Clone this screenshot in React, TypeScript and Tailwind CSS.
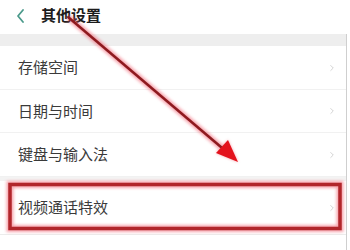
import { ChevronRight } from 'lucide-react';

const rows = [
    { label: '存储空间', h: 'h-[44px]' },
    { label: '日期与时间', h: 'h-[43px]' },
    { label: '键盘与输入法', h: 'h-[44px]' },
];

function Chevron() {
    return <ChevronRight className="w-[10px] h-[12px] text-[#b8b8b8]" strokeWidth={1.5} />;
}

function Row({ label, h }: { label: string; h: string }) {
    return (
        <div className={`${h} flex items-center justify-between pl-[18px] pr-[9px] border-b border-[#f1f1f1]`}>
            <span className="text-[15px] text-[#3a3a3a]">{label}</span>
            <Chevron />
        </div>
    );
}

export default function App() {
    return (
        <div
            className="relative w-[350px] h-[250px] overflow-hidden bg-white"
            style={{ fontFamily: '"Noto Sans CJK SC", "Noto Sans", sans-serif' }}
        >
            {/* Header */}
            <div className="h-[34px] flex items-center pl-[16px]">
                <svg width="9" height="14" viewBox="0 0 9 14" className="mt-[-2px]">
                    <polyline points="7,1 2,7 7,13" fill="none" stroke="#4b9a8b" strokeWidth="1.8" strokeLinecap="round" strokeLinejoin="round" />
                </svg>
                <span className="ml-[16px] text-[15px] font-bold text-[#1c1c1c] mt-[-4px]">其他设置</span>
            </div>

            {/* Settings list */}
            <div className="w-[347px] border-r border-[#cfcfcf]">
                <div className="h-[12px] bg-[#eeeeee]" />
                {rows.map((r) => (
                    <Row key={r.label} label={r.label} h={r.h} />
                ))}
                <div className="h-[4px] bg-[#f3f3f3]" />
                <div className="h-[54px] flex items-center justify-between pl-[18px] pr-[9px] border-b border-[#ececec]">
                    <span className="text-[15px] text-[#3a3a3a]">视频通话特效</span>
                    <Chevron />
                </div>
                <div className="h-[20px]" />
            </div>

            {/* Annotation overlay */}
            <svg className="absolute inset-0 pointer-events-none" width="350" height="250" viewBox="0 0 350 250">
                <defs>
                    <filter id="glow" x="-20%" y="-20%" width="140%" height="140%">
                        <feGaussianBlur stdDeviation="1.6" />
                    </filter>
                </defs>
                <g filter="url(#glow)" opacity="0.55">
                    <line x1="68" y1="17" x2="228" y2="153" stroke="#f05a6a" strokeWidth="6" />
                    <rect x="10" y="184.5" width="330" height="44" fill="none" stroke="#f05a6a" strokeWidth="7" />
                    <polygon points="238,162 216,153 228,140" fill="#f05a6a" />
                </g>
                <line x1="68" y1="17" x2="228" y2="153" stroke="#8e1a1f" strokeWidth="2.5" />
                <polygon points="238,162 216,153 228,140" fill="#e3121c" />
                <rect x="10" y="184.5" width="330" height="44" fill="none" stroke="#b1262b" strokeWidth="3.5" />
            </svg>
        </div>
    );
}
